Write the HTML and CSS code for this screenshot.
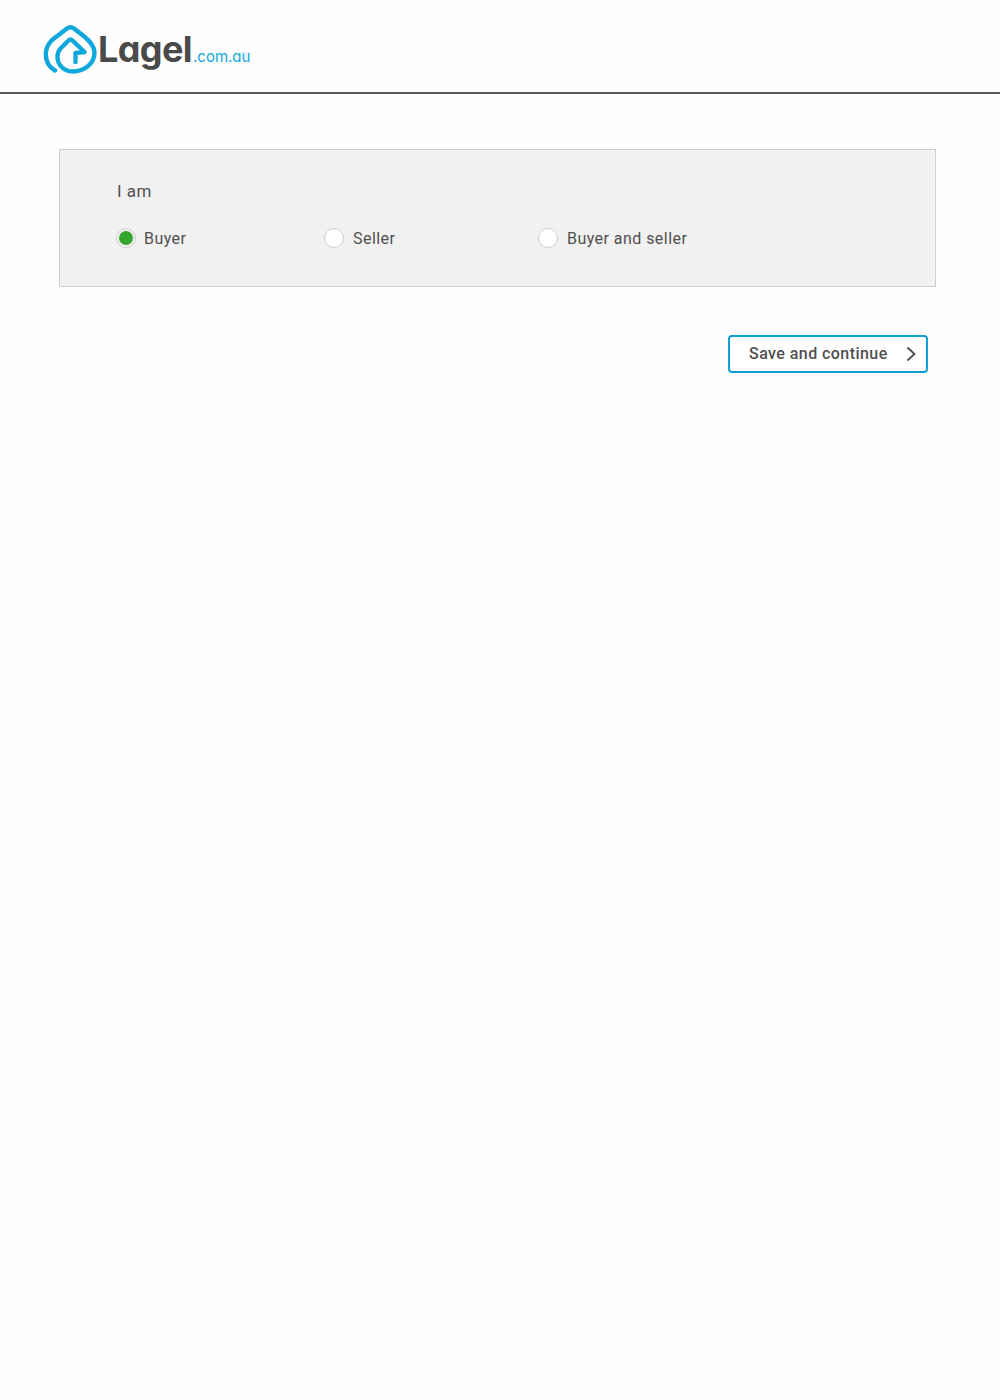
FILE: index.html
```html
<!DOCTYPE html>
<html lang="en">
<head>
<meta charset="utf-8">
<title>Lagel</title>
<link rel="stylesheet" href="styles.css">
</head>
<body>
<header class="header">
  <a class="logo" href="#">
    <svg class="logo-mark" width="54" height="50" viewBox="43 24 54 50" fill="none" stroke="#0ea8dc" stroke-width="4.4" stroke-linecap="round" stroke-linejoin="round">
      <path d="M55 70.500C49 67 45.800 61 45.800 54.500C45.800 48.500 48.500 43.500 52 40L67 28.500Q70.500 26 74 28.500L83 35.500C90 41 94.500 46.500 94.500 52.500C94.500 63 85 71.500 73 71.500C64 71.500 57.500 65 57.500 57C57.500 53 58.500 50.500 61 48L68.500 40.500Q70.500 38.500 72.500 40.500L84.500 52L75.500 53V62"/>
    </svg>
    <span class="logo-name">Lagel</span><span class="logo-tld">.com.au</span>
  </a>
</header>
<main class="main">
  <section class="panel">
    <p class="question">I am</p>
    <div class="options">
      <label class="option option-buyer"><span class="radio radio-on"></span><span>Buyer</span></label>
      <label class="option option-seller"><span class="radio"></span><span>Seller</span></label>
      <label class="option"><span class="radio"></span><span>Buyer and seller</span></label>
    </div>
  </section>
  <div class="actions">
    <button class="continue" type="button">
      <span class="continue-label">Save and continue</span>
      <svg class="continue-icon" width="10" height="16" viewBox="0 0 10 16" fill="none" stroke="#4a4a4a" stroke-width="1.8"><path d="M1.500 1.500L8.500 8L1.500 14.500"/></svg>
    </button>
  </div>
</main>
</body>
</html>
```
FILE: styles.css
```css
* { box-sizing: border-box; }
body {
  margin: 0;
  background: #fefefe;
  color: #505050;
  font-family: Roboto, "Liberation Sans", sans-serif;
}
.header {
  height: 94px;
  padding: 24px 0 0 43px;
  border-bottom: 2px solid #555;
}
.logo {
  display: flex;
  align-items: flex-start;
  text-decoration: none;
}
.logo-mark { flex: none; }
.logo-name {
  margin: 2px 0 0 1px;
  font: 700 36px/46px Inter, sans-serif;
  font-feature-settings: "cv11";
  color: #4a4a4a;
  letter-spacing: -0.6px;
}
.logo-tld {
  margin: 23px 0 0 1px;
  font: 400 15px/20px Inter, sans-serif;
  font-feature-settings: "cv11";
  color: #0ea8dc;
}
.main { padding: 55px 64px 0 59px; }
.panel {
  height: 138px;
  padding: 31px 57px 0;
  background: #f1f1f1;
  border: 1px solid #cfcfcf;
}
.question {
  margin: 0 0 26px;
  font-size: 17px;
  line-height: 20px;
  letter-spacing: 0.45px;
}
.options { display: flex; }
.option {
  display: flex;
  align-items: center;
  gap: 9px;
  height: 22px;
  font-size: 16px;
  letter-spacing: 0.45px;
}
.option-buyer { width: 208px; margin-left: -1px; gap: 8px; }
.option-seller { width: 214px; }
.radio {
  display: flex;
  align-items: center;
  justify-content: center;
  width: 20px;
  height: 20px;
  background: #fff;
  border: 1px solid #cfcfcf;
  border-radius: 50%;
}
.radio-on { background: #f1f1f1; }
.radio-on::after {
  content: "";
  width: 14px;
  height: 14px;
  background: #35a62b;
  border-radius: 50%;
}
.actions {
  display: flex;
  justify-content: flex-end;
  margin-top: 48px;
  padding-right: 8px;
}
.continue {
  display: flex;
  align-items: center;
  justify-content: space-between;
  width: 200px;
  height: 38px;
  padding: 0 10px 0 19px;
  background: #fff;
  border: 2px solid #0ea0d2;
  border-radius: 4px;
  color: #505050;
  font: 500 16px/20px Roboto, sans-serif;
  letter-spacing: 0.44px;
}
.continue-label { margin-top: -1px; }
.continue-icon { margin-top: -1px; }
```
